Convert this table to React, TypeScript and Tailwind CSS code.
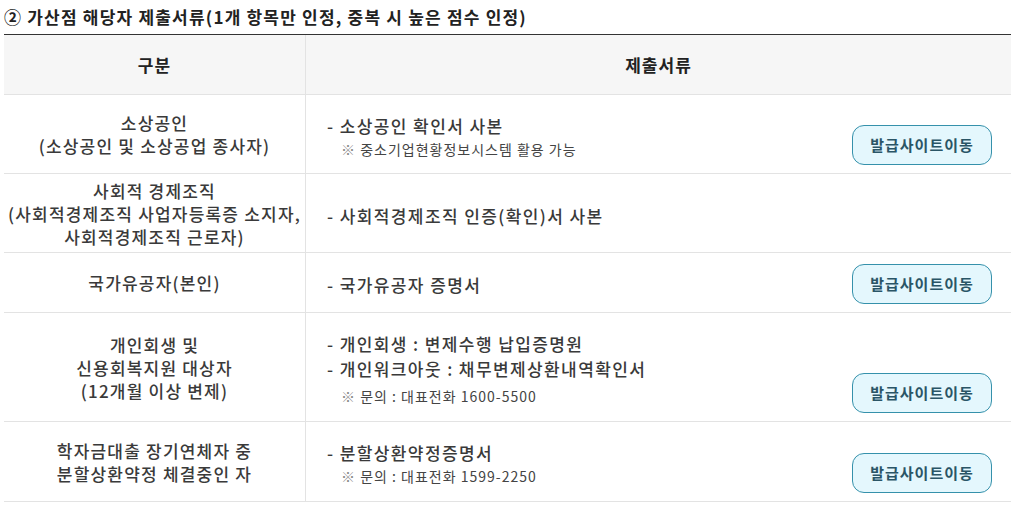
const rows = [
  {
    h: "h-[79px]",
    left: ["소상공인", "(소상공인 및 소상공업 종사자)"],
    docs: ["소상공인 확인서 사본"],
    note: "중소기업현황정보시스템 활용 가능",
    gap: "mt-0",
    button: true,
  },
  {
    h: "h-[79px]",
    left: ["사회적 경제조직", "(사회적경제조직 사업자등록증 소지자,", "사회적경제조직 근로자)"],
    docs: ["사회적경제조직 인증(확인)서 사본"],
    note: "",
    gap: "mt-0",
    button: false,
  },
  {
    h: "h-[60px]",
    left: ["국가유공자(본인)"],
    docs: ["국가유공자 증명서"],
    note: "",
    gap: "mt-0",
    button: true,
  },
  {
    h: "h-[109px]",
    left: ["개인회생 및", "신용회복지원 대상자", "(12개월 이상 변제)"],
    docs: ["개인회생 : 변제수행 납입증명원", "개인워크아웃 : 채무변제상환내역확인서"],
    note: "문의 : 대표전화 1600-5500",
    gap: "mt-[4px]",
    button: true,
  },
  {
    h: "h-[80px]",
    left: ["학자금대출 장기연체자 중", "분할상환약정 체결중인 자"],
    docs: ["분할상환약정증명서"],
    note: "문의 : 대표전화 1599-2250",
    gap: "mt-0",
    button: true,
  },
];

export default function App() {
  return (
    <div
      className="w-[1016px] h-[508px] bg-white pl-[4px] pr-[5px] text-[#333]"
      style={{ fontFamily: '"Noto Sans CJK KR", "Noto Sans", sans-serif' }}
    >
      {/* Title */}
      <h2 className="h-[34px] pt-[5px] text-[17px] leading-[24px] font-bold text-[#222] tracking-[1.2px]">
        ② 가산점 해당자 제출서류(1개 항목만 인정, 중복 시 높은 점수 인정)
      </h2>

      {/* Table */}
      <div className="border-t border-[#333]">
        <div className="flex h-[60px] bg-[#f6f6f6] border-b border-[#e3e3e3] text-[17px] font-bold text-[#222] tracking-[1px]">
          <div className="w-[302px] flex items-center justify-center border-r border-[#e3e3e3]">구분</div>
          <div className="flex-1 flex items-center justify-center">제출서류</div>
        </div>

        {rows.map((r, i) => (
          <div key={i} className={`flex ${r.h} border-b border-[#e3e3e3]`}>
            <div className="w-[302px] flex flex-col items-center justify-center border-r border-[#e3e3e3] text-[17px] font-medium leading-[23px] tracking-[1.2px] text-center text-[#3a3a3a]">
              {r.left.map((t, j) => (
                <p key={j}>{t}</p>
              ))}
            </div>
            <div className="flex-1 flex pl-[21px] pr-[19px] pb-[8px]">
              <div className="flex-1 flex flex-col justify-center pt-[12px]">
                {r.docs.map((d, j) => (
                  <p key={j} className="text-[17px] font-medium leading-[25px] tracking-[1.4px] text-[#3a3a3a]">
                    - {d}
                  </p>
                ))}
                {r.note && (
                  <p className={`pl-[14px] text-[14px] leading-[22px] tracking-[1px] text-[#444] ${r.gap}`}>
                    <span className="text-[#888]">※</span> {r.note}
                  </p>
                )}
              </div>
              {r.button && (
                <div className="flex items-end">
                  <button className="w-[140px] h-[40px] rounded-[12px] border border-[#3591ab] bg-[#e4f7fd] text-[15px] font-bold text-[#2a5566] tracking-[1px]">
                    발급사이트이동
                  </button>
                </div>
              )}
            </div>
          </div>
        ))}
      </div>
    </div>
  );
}
